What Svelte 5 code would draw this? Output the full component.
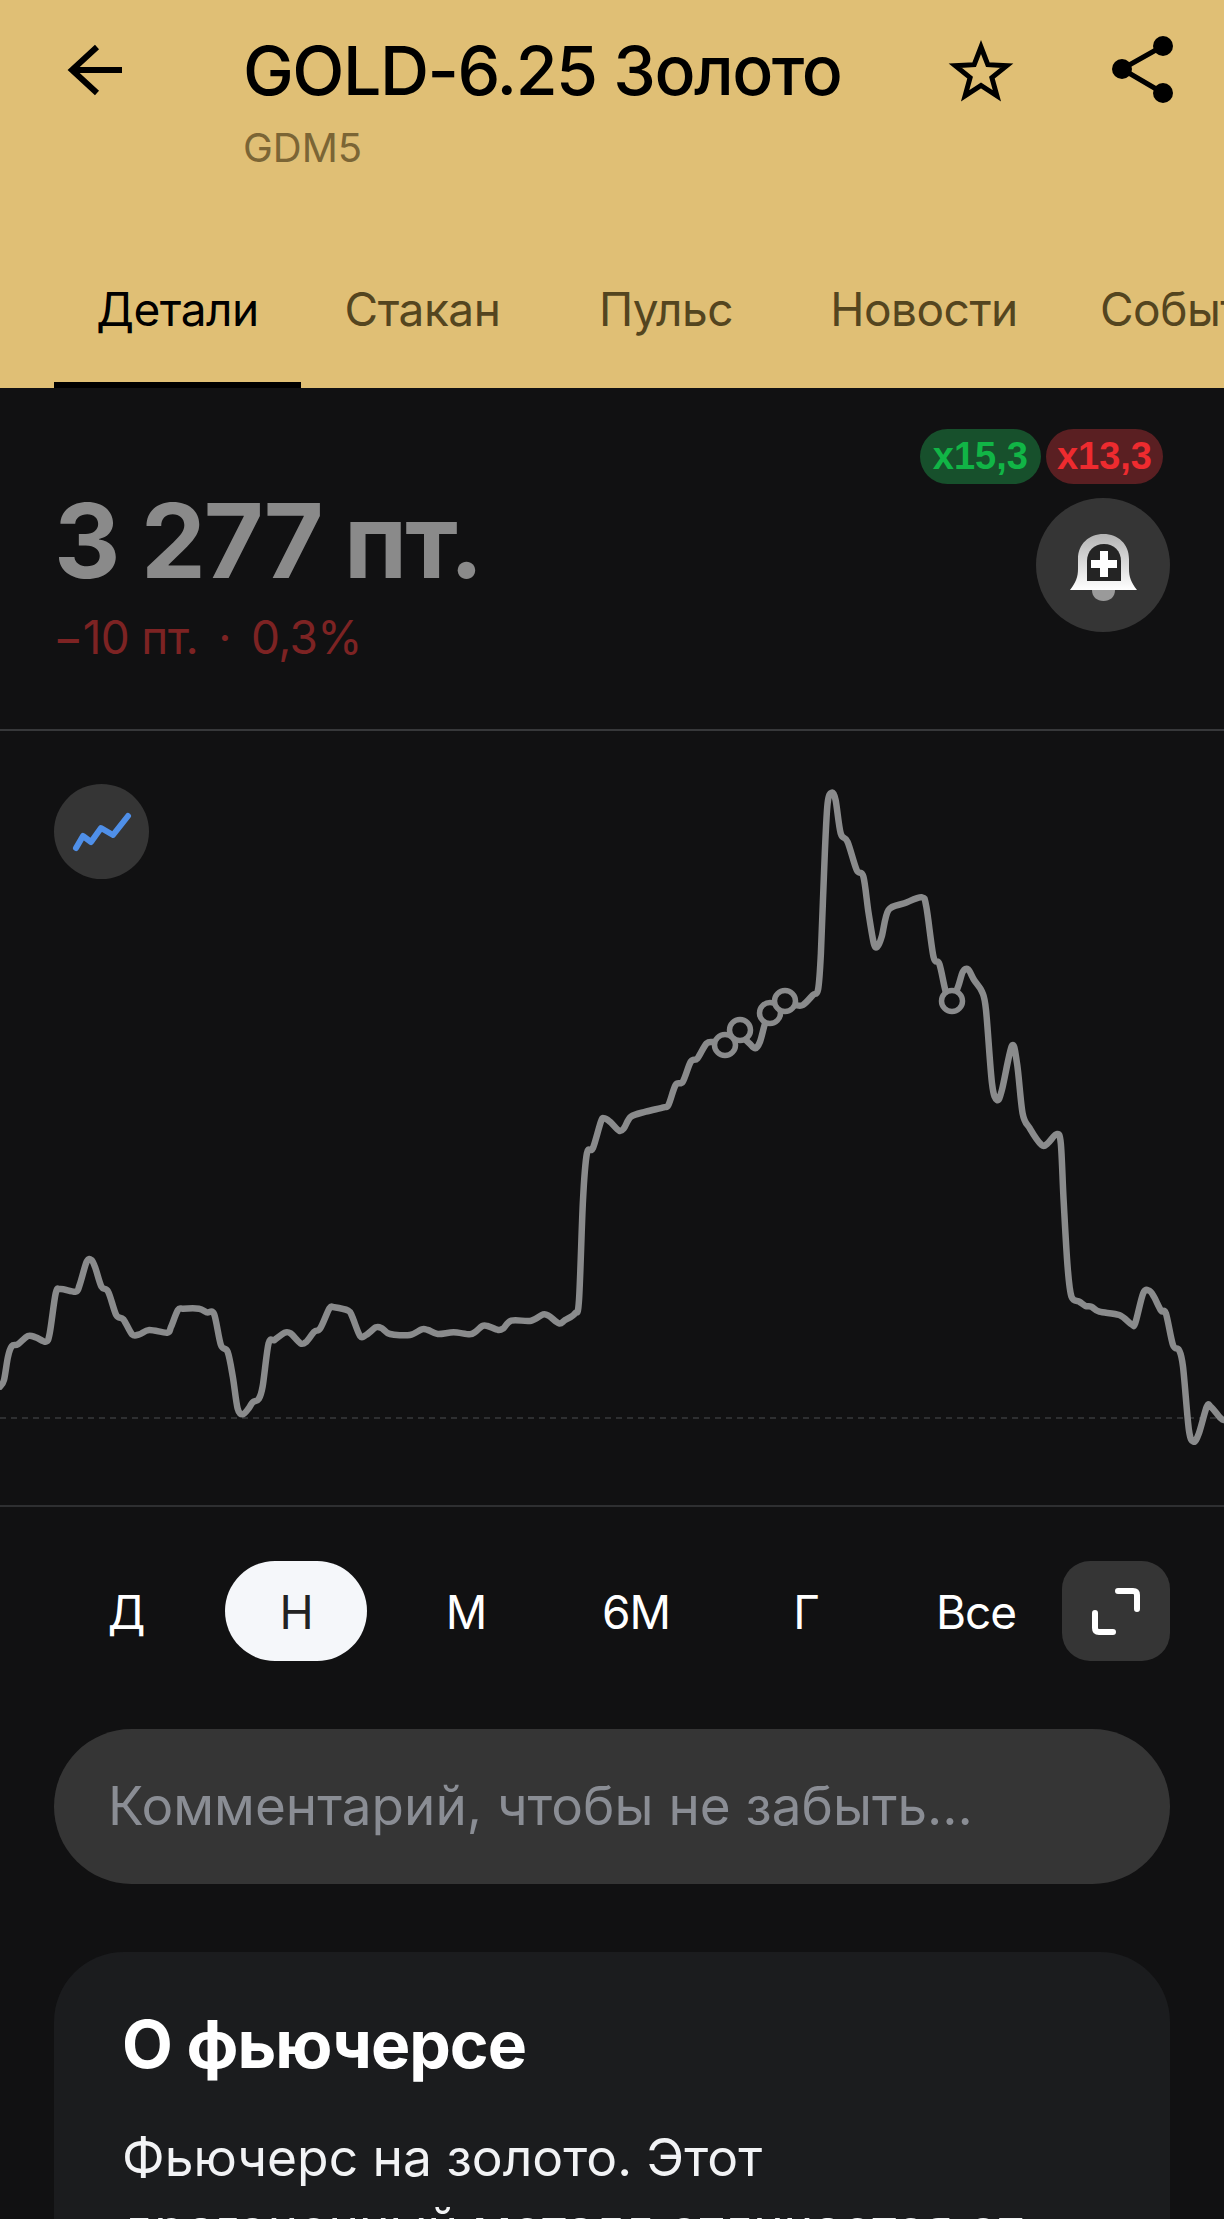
<script>
  const a = [[0,860],[10,840],[20,770],[30,738],[45,733],[70,708],[90,712],[115,725],[125,700],[140,580],[152,567],[190,575],[200,555],[218,485],[230,480],[240,505],[255,560],[272,575],[292,645],[310,658],[332,703],[350,703],[375,690],[420,698],[430,680],[447,630],[460,626],[500,626],[520,637],[538,642],[555,735],[572,755],[585,830],[597,925],[610,943],[625,925],[635,907],[650,897],[660,860],[675,730],[690,720],[715,698],[730,700],[755,730],[770,725],[790,695],[805,685],[828,625],[840,622],[875,632],[885,650],[905,708],[920,705],[945,682],[960,685],[980,702],[1030,705],[1060,688],[1075,690],[1100,702],[1140,697],[1180,703],[1195,695],[1212,678],[1225,678],[1252,690],[1265,685],[1285,662],[1335,662],[1365,643],[1380,648],[1405,670],[1420,660],[1445,640],[1455,600],[1465,300],[1475,160],[1490,145],[1510,65]].map(([x,y]) => [x/2.513, 1100+y/3]);
  const b = [[10,1045],[25,1055],[48,1082],[60,1075],[78,1040],[115,1025],[160,1012],[172,1005],[190,945],[208,935],[228,875],[245,865],[268,820],[290,815],[330,800],[355,800],[375,820],[390,835],[402,815],[415,760],[428,730],[465,700],[490,705],[510,705],[535,675],[548,658],[555,550],[565,250],[572,100],[582,68],[592,90],[605,190],[622,215],[645,300],[662,320],[675,430],[688,520],[697,530],[708,500],[725,420],[765,400],[808,382],[820,410],[838,560],[853,582],[870,670],[885,690],[900,650],[912,605],[925,598],[940,630],[960,665],[970,720],[985,940],[998,990],[1010,960],[1035,828],[1048,880],[1062,1030],[1080,1075],[1110,1125],[1125,1120],[1148,1092]].map(([x,y]) => [600+x/2.513, 770+y/3]);
  const c = [[1158,130],[1165,300],[1175,500],[1185,590],[1205,605],[1220,618],[1235,620],[1255,635],[1305,645],[1335,672],[1345,670],[1365,580],[1380,572],[1392,590],[1410,632],[1422,640],[1440,735],[1455,750],[1465,800],[1480,990],[1492,1025],[1505,1000],[1525,920],[1535,920],[1560,955],[1568,960]].map(([x,y]) => [600+x/2.513, 1100+y/3]);
  const pts = [...a, ...b, ...c];

  function smooth(p) {
    let d = `M${p[0][0].toFixed(1)} ${p[0][1].toFixed(1)}`;
    for (let i = 0; i < p.length - 1; i++) {
      const p0 = p[Math.max(0, i - 1)], p1 = p[i], p2 = p[i + 1], p3 = p[Math.min(p.length - 1, i + 2)];
      const k = 0.16;
      const c1 = [p1[0] + (p2[0] - p0[0]) * k, p1[1] + (p2[1] - p0[1]) * k];
      const c2 = [p2[0] - (p3[0] - p1[0]) * k, p2[1] - (p3[1] - p1[1]) * k];
      d += `C${c1[0].toFixed(1)} ${c1[1].toFixed(1)} ${c2[0].toFixed(1)} ${c2[1].toFixed(1)} ${p2[0].toFixed(1)} ${p2[1].toFixed(1)}`;
    }
    return d;
  }
  const line = smooth(pts);
  const dots = [[725,1045],[740,1030],[770,1013],[785,1001],[952,1001]];
  const tabs = ['Детали', 'Стакан', 'Пульс', 'Новости', 'События'];
  const ranges = ['Д', 'Н', 'М', '6М', 'Г', 'Все'];
</script>

<div class="page">
  <header class="head">
    <div class="bar">
      <svg class="back" viewBox="60 35 70 70" fill="none" stroke="#000" stroke-width="6">
        <path d="M72 70H122M97 47L72 70L97 93" stroke-linejoin="miter" />
      </svg>
      <div class="titles">
        <div class="title">GOLD-6.25 Золото</div>
        <div class="code">GDM5</div>
      </div>
      <svg class="star" viewBox="941 34 80 80" fill="none" stroke="#000" stroke-width="5" stroke-miterlimit="10">
        <path d="M981 47L987.8 64.7L1006.7 65.7L991.9 77.6L996.9 95.8L981 85.5L965.1 95.8L970.1 77.6L955.3 65.7L974.2 64.7Z" />
      </svg>
      <svg class="share" viewBox="1107 30 71 80" fill="#000" stroke="#000">
        <path d="M1163 46L1122 69L1163 93" fill="none" stroke-width="5" />
        <circle cx="1163" cy="46" r="10" stroke="none" />
        <circle cx="1122" cy="69" r="10" stroke="none" />
        <circle cx="1163" cy="93" r="10" stroke="none" />
      </svg>
    </div>
    <nav class="tabs">
      {#each tabs as t, i}
        <div class="tab t{i}" class:on={i === 0}>{t}</div>
      {/each}
    </nav>
  </header>

  <main class="body">
    <section class="price">
      <div class="left">
        <div class="big">3 277 пт.</div>
        <div class="delta">−10 пт. <span class="sep">·</span> 0,3%</div>
      </div>
      <div class="right">
        <div class="badges">
          <span class="badge green">x15,3</span>
          <span class="badge red">x13,3</span>
        </div>
        <div class="bell">
          <svg viewBox="1060 525 84 80" width="84" height="80">
            <defs>
              <linearGradient id="bg" x1="0" y1="0" x2="0" y2="1">
                <stop offset="0" stop-color="#b4b4b4" />
                <stop offset="1" stop-color="#ffffff" />
              </linearGradient>
            </defs>
            <path d="M1091 589H1114C1114 596 1109 600 1102.500 600C1096 600 1091 596 1091 589Z" fill="#9a9a9a" />
            <path d="M1069 589C1075 581 1077 576 1077 568V558C1077 543 1088 533 1102.500 533C1117 533 1128 543 1128 558V568C1128 576 1130 581 1136 589Z" fill="url(#bg)" />
            <path d="M1086 580V560C1086 550 1093 543 1103 543C1113 543 1120 550 1120 560V580Z" fill="#242424" />
            <path d="M1099 550H1107V559H1116V567H1107V576H1099V567H1090V559H1099Z" fill="#fff" />
          </svg>
        </div>
      </div>
    </section>

    <section class="chart">
      <svg class="plot" viewBox="0 731 1224 774" fill="none">
        <line x1="0" x2="1224" y1="1418" y2="1418" stroke="#2e2f31" stroke-width="2" stroke-dasharray="6 5" />
        <path d={line} stroke="#8a8b8c" stroke-width="6.500" stroke-linejoin="round" stroke-linecap="round" />
        {#each dots as [x, y]}
          <circle cx={x} cy={y} r="10.500" fill="#111112" stroke="#8a8b8c" stroke-width="5.500" />
        {/each}
      </svg>
      <div class="mode">
        <svg viewBox="68 806 64 46" width="64" height="46" fill="none">
          <path d="M74 845L81 833L89 839L99 825L111 832L126 813" stroke="#4f8fe8" stroke-width="6" stroke-linecap="round" stroke-linejoin="round" />
        </svg>
      </div>
    </section>

    <section class="ranges">
      {#each ranges as r, i}
        <div class="range" class:on={i === 1}>{r}</div>
      {/each}
      <div class="expand">
        <svg viewBox="1085 1581 62 61" width="62" height="61" fill="none" stroke="#fff" stroke-width="6" stroke-linecap="round" stroke-linejoin="round">
          <path d="M1118 1591H1133Q1137 1591 1137 1595V1609" />
          <path d="M1095 1613V1628Q1095 1632 1099 1632H1113" />
        </svg>
      </div>
    </section>

    <div class="comment">Комментарий, чтобы не забыть…</div>

    <section class="card">
      <h2>О фьючерсе</h2>
      <p>Фьючерс на золото. Этот драгоценный металл отличается от</p>
    </section>
  </main>
</div>

<style>
  :global(body) { margin: 0; background: #111112; }
  .page {
    width: 1224px; height: 2219px; overflow: hidden; background: #111112;
    font-family: Inter, "Noto Sans", sans-serif; color: #fff;
  }
  .head { height: 388px; background: #e0bf75; display: flex; flex-direction: column; }
  .bar { height: 270px; display: flex; align-items: flex-start; flex: none; }
  .back { width: 70px; height: 70px; margin: 35px 0 0 60px; flex: none; }
  .titles { margin-left: 113px; width: 698px; flex: none; }
  .title { font-size: 68px; line-height: 80px; margin-top: 30px; color: #000; letter-spacing: -1.5px; font-weight: 500; white-space: nowrap; }
  .code { font-size: 40px; line-height: 50px; margin-top: 13px; color: #7b6535; }
  .star { width: 80px; height: 80px; margin: 34px 0 0 0; flex: none; }
  .share { width: 71px; height: 80px; margin: 30px 0 0 86px; flex: none; }
  .tabs { display: flex; flex: 1; padding-left: 54px; white-space: nowrap; overflow: hidden; }
  .tab { font-size: 46px; line-height: 60px; padding-top: 9px; text-align: center; color: #54451f; flex: none; box-sizing: border-box; height: 118px; letter-spacing: -0.5px; }
  .t0 { width: 247px; }
  .t1 { width: 243px; }
  .t2 { width: 244px; }
  .t3 { width: 272px; }
  .t4 { padding-left: 40px; text-align: left; }
  .tab.on { color: #000; border-bottom: 6px solid #000; }

  .body { display: flex; flex-direction: column; }
  .price { height: 343px; box-sizing: border-box; padding: 41px 54px 0; display: flex; justify-content: space-between; border-bottom: 2px solid #37383a; }
  .big { font-size: 103px; line-height: 120px; font-weight: 700; color: #8a8a8a; margin-top: 52px; letter-spacing: -2px; }
  .delta { font-size: 46px; line-height: 56px; color: #7d2323; margin-top: 8px; letter-spacing: -0.7px; margin-left: -1px; }
  .sep { margin: 0 8px; }
  .right { display: flex; flex-direction: column; align-items: flex-end; }
  .badges { display: flex; gap: 5px; margin-right: 7px; }
  .badge { height: 55px; border-radius: 28px; font: 700 38px/55px "Liberation Sans", sans-serif; }
  .green { background: #17502c; color: #11b546; padding: 0 13px; }
  .red { background: #5a1f22; color: #ee2b2f; padding: 0 11px; }
  .bell { width: 134px; height: 134px; border-radius: 50%; background: #353535; margin-top: 14px; display: flex; align-items: center; justify-content: center; }
  .bell svg { display: block; margin-top: 2px; }

  .chart { position: relative; height: 774px; border-bottom: 2px solid #2e2f31; }
  .plot { display: block; width: 1224px; height: 774px; }
  .mode { position: absolute; left: 54px; top: 53px; width: 95px; height: 95px; border-radius: 50%; background: #353535; display: flex; align-items: center; justify-content: center; }
  .mode svg { display: block; }

  .ranges { display: flex; gap: 28px; padding: 54px 0 0 55px; align-items: stretch; }
  .range { flex: none; width: 142px; height: 100px; line-height: 102px; text-align: center; font-size: 46px; border-radius: 50px; color: #fff; letter-spacing: -1px; }
  .range.on { background: #f5f7fa; color: #222; }
  .expand { flex: none; margin-left: -13px; width: 108px; height: 100px; border-radius: 28px; background: #353535; display: flex; align-items: center; justify-content: center; }
  .expand svg { display: block; }

  .comment { margin: 68px 54px 0; height: 155px; line-height: 155px; border-radius: 78px; background: #353535; padding-left: 54px; font-size: 53px; color: #8a8d94; white-space: nowrap; }

  .card { margin: 68px 54px 0; padding: 52px 68px 0; background: #1b1c1e; border-radius: 70px 70px 0 0; height: 500px; box-sizing: border-box; }
  h2 { margin: 0; font-size: 66px; line-height: 80px; font-weight: 700; color: #fff; letter-spacing: -1px; }
  p { margin: 38px 0 0; font-size: 51.5px; line-height: 70px; color: #f2f3f5; }
</style>
